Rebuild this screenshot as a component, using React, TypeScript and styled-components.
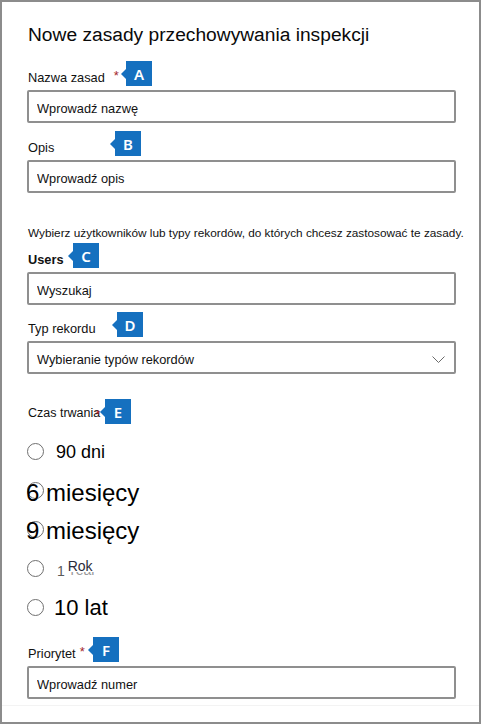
import React from "react";
import styled, { createGlobalStyle } from "styled-components";

const Global = createGlobalStyle`
  html, body { margin: 0; padding: 0; background: #ffffff; }
  body { font-family: "Liberation Sans", Arial, sans-serif; color: #1b1b1b; }
  * { box-sizing: border-box; }
`;

const Panel = styled.div`
  width: 481px;
  height: 724px;
  border: 2px solid #8c8c8c;
  padding: 0 23px 0 25px;
  display: flex;
  flex-direction: column;
  overflow: hidden;
  background: #fff;
`;

const Title = styled.h1`
  margin: 19px 0 0 1px;
  font-size: 19.2px;
  line-height: 28px;
  font-weight: 400;
  color: #0a0a0a;
  white-space: nowrap;
`;

const Field = styled.section<{ $top: number }>`
  margin-top: ${(p) => p.$top}px;
  display: flex;
  flex-direction: column;
  gap: 4px;
`;

const LabelRow = styled.div`
  position: relative;
  height: 25px;
  display: flex;
  align-items: flex-end;
  padding-left: 1px;
`;

const Label = styled.label<{ $bold?: boolean; $small?: boolean }>`
  font-size: ${(p) => (p.$small ? "12.5px" : "12.8px")};
  line-height: 17px;
  padding-bottom: ${(p) => (p.$small ? "2px" : "0")};
  font-weight: ${(p) => (p.$bold ? 700 : 400)};
  color: #111;
  white-space: nowrap;
`;

const Required = styled.span<{ $gap: number }>`
  align-self: flex-start;
  margin-top: ${(p) => (p.$gap < 0 ? 9 : 8)}px;
  margin-left: ${(p) => p.$gap}px;
  color: #a4262c;
  font-size: 13px;
  line-height: 13px;
`;

const Callout = styled.span<{ $x: number }>`
  position: absolute;
  top: 0;
  left: ${(p) => p.$x + 5}px;
  width: 26px;
  height: 25px;
  background: #1570bf;
  color: #fff;
  font-family: "Noto Sans", "Liberation Sans", sans-serif;
  font-weight: 600;
  font-size: 15px;
  display: flex;
  align-items: center;
  justify-content: center;
  &::before {
    content: "";
    position: absolute;
    left: -5px;
    top: 8px;
    border-right: 5px solid #1570bf;
    border-top: 5px solid transparent;
    border-bottom: 5px solid transparent;
  }
`;

const TextBox = styled.input`
  height: 33px;
  width: 100%;
  border: 2px solid #8f8f8f;
  border-radius: 2px;
  padding: 4px 8px 0;
  font-family: "Liberation Sans", Arial, sans-serif;
  font-size: 12.8px;
  color: #111;
  background: #fff;
  outline: none;
  &::placeholder { color: #111; opacity: 1; }
`;

const Select = styled.div`
  height: 33px;
  border: 2px solid #8f8f8f;
  border-radius: 2px;
  padding: 4px 9px 0 8px;
  display: flex;
  align-items: center;
  justify-content: space-between;
  font-size: 12.8px;
  color: #111;
`;

const Helper = styled.p`
  margin: 32px 0 0 1px;
  font-size: 11.8px;
  line-height: 16px;
  color: #111;
  white-space: nowrap;
`;

const RadioList = styled.div`
  margin-top: 8px;
  display: flex;
  flex-direction: column;
`;

const RadioRow = styled.div`
  height: 39px;
  display: grid;
  grid-template-columns: 17px 1fr;
  column-gap: 12px;
  align-items: center;
`;

const Circle = styled.span`
  grid-area: 1 / 1;
  width: 17px;
  height: 17px;
  border-radius: 50%;
  border: 1.5px solid #6f6f6f;
  background: transparent;
`;

const RadioText = styled.span<{ $size: number; $overlap?: boolean; $drop?: number; $indent?: number; $muted?: boolean }>`
  grid-row: 1;
  grid-column: ${(p) => (p.$overlap ? "1 / -1" : "2")};
  font-size: ${(p) => p.$size}px;
  line-height: 1;
  padding-top: ${(p) => p.$drop ?? 0}px;
  margin-left: ${(p) => (p.$overlap ? -1 : p.$indent ?? 0)}px;
  color: ${(p) => (p.$muted ? "#5a5a5a" : "#000")};
  white-space: nowrap;
`;

const Raised = styled.span`
  font-size: 14px;
  color: #2b2b3a;
  vertical-align: 5px;
  margin-left: -1px;
`;

const Ghost = styled.span`
  display: inline-block;
  height: 5px;
  overflow: hidden;
  margin-left: -25px;
  vertical-align: -1px;
  font-size: 14px;
  line-height: 14px;
  color: #9a9a9a;
  & > span { display: block; margin-top: -9px; }
`;

const Footer = styled.div`
  margin: 6px -23px 0 -25px;
  border-top: 1px solid #f3f3f3;
`;

const Chevron = () => (
  <svg width="13" height="7" viewBox="0 0 13 7" aria-hidden="true">
    <path d="M0.5 0.5 L6.5 6.5 L12.5 0.5" fill="none" stroke="#6b6b6b" strokeWidth="1" />
  </svg>
);

export default function App() {
  return (
    <>
      <Global />
      <Panel>
        <Title>Nowe zasady przechowywania inspekcji</Title>

        <Field $top={12}>
          <LabelRow>
            <Label>Nazwa zasad</Label>
            <Required $gap={9}>*</Required>
            <Callout $x={94}>A</Callout>
          </LabelRow>
          <TextBox placeholder="Wprowadź nazwę" />
        </Field>

        <Field $top={8}>
          <LabelRow>
            <Label>Opis</Label>
            <Callout $x={83}>B</Callout>
          </LabelRow>
          <TextBox placeholder="Wprowadź opis" />
        </Field>

        <Helper>Wybierz użytkowników lub typy rekordów, do których chcesz zastosować te zasady.</Helper>

        <Field $top={2}>
          <LabelRow>
            <Label $bold>Users</Label>
            <Callout $x={41}>C</Callout>
          </LabelRow>
          <TextBox placeholder="Wyszukaj" />
        </Field>

        <Field $top={7}>
          <LabelRow>
            <Label>Typ rekordu</Label>
            <Callout $x={85}>D</Callout>
          </LabelRow>
          <Select>
            <span>Wybieranie typów rekordów</span>
            <Chevron />
          </Select>
        </Field>

        <Field $top={25}>
          <LabelRow>
            <Label $small>Czas trwania</Label>
            <Required $gap={-5}>*</Required>
            <Callout $x={73}>E</Callout>
          </LabelRow>
        </Field>

        <RadioList role="radiogroup">
          <RadioRow>
            <Circle />
            <RadioText $size={18}>90 dni</RadioText>
          </RadioRow>
          <RadioRow>
            <Circle />
            <RadioText $size={24} $overlap $drop={5}>6 miesięcy</RadioText>
          </RadioRow>
          <RadioRow>
            <Circle />
            <RadioText $size={24} $overlap $drop={2}>9 miesięcy</RadioText>
          </RadioRow>
          <RadioRow>
            <Circle />
            <RadioText $size={14} $muted $indent={1}>
              1 <Raised>Rok</Raised>
              <Ghost><span>Year</span></Ghost>
            </RadioText>
          </RadioRow>
          <RadioRow>
            <Circle />
            <RadioText $size={22} $drop={1} $indent={-2}>10 lat</RadioText>
          </RadioRow>
        </RadioList>

        <Field $top={10}>
          <LabelRow>
            <Label>Priorytet</Label>
            <Required $gap={4}>*</Required>
            <Callout $x={61}>F</Callout>
          </LabelRow>
          <TextBox placeholder="Wprowadź numer" />
        </Field>

        <Footer />
      </Panel>
    </>
  );
}
